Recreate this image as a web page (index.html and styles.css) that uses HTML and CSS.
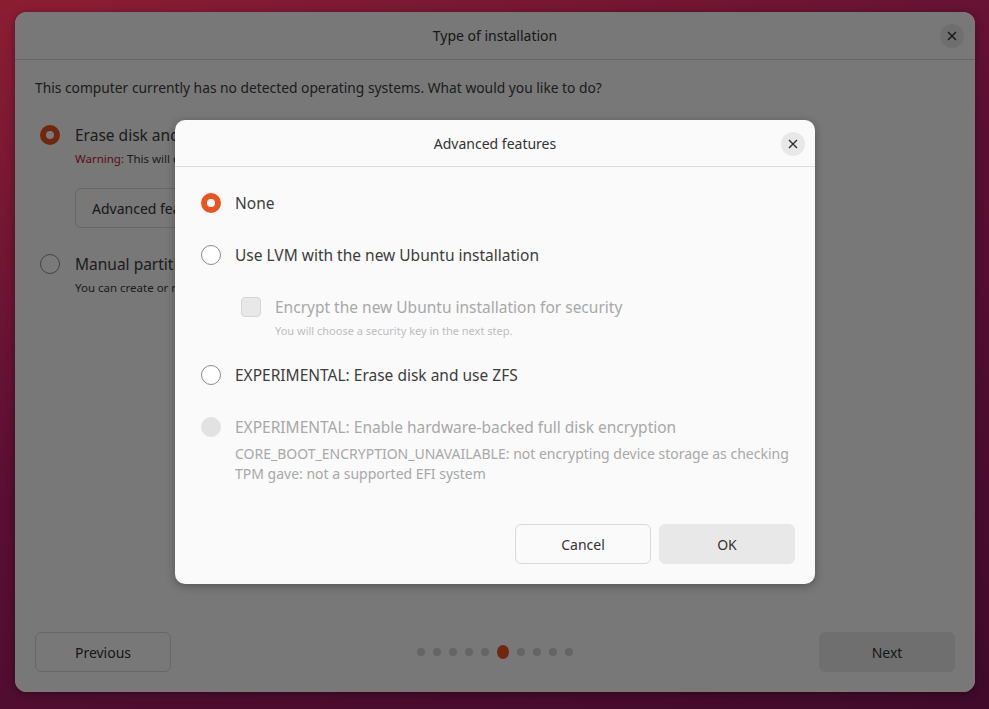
FILE: index.html
```html
<!DOCTYPE html>
<html lang="en">
<head>
    <meta charset="UTF-8">
    <title>Type of installation</title>
    <link rel="stylesheet" href="styles.css">
</head>
<body>
    <div class="window">
        <header class="win-header">
            <h1>Type of installation</h1>
            <span class="close-btn win-close">
                <svg width="10" height="10" viewBox="0 0 10 10"><path d="M1 1L9 9M9 1L1 9" stroke="#2e2e2e" stroke-width="1.4" fill="none"/></svg>
            </span>
        </header>
        <main class="win-body">
            <p class="intro">This computer currently has no detected operating systems. What would you like to do?</p>
            <div class="choice">
                <div class="opt big">
                    <span class="radio checked"></span>
                    <span>Erase disk and install Ubuntu</span>
                </div>
                <p class="hint"><span class="warn">Warning:</span> This will delete all your programs, documents, photos, music, and any other files.</p>
                <button class="btn adv-btn">Advanced features...</button>
            </div>
            <div class="choice">
                <div class="opt big">
                    <span class="radio"></span>
                    <span>Manual partitioning</span>
                </div>
                <p class="hint">You can create or resize partitions yourself, or choose multiple partitions for Ubuntu.</p>
            </div>
        </main>
        <footer class="win-footer">
            <button class="btn nav-btn">Previous</button>
            <div class="dots">
                <span class="dot"></span>
                <span class="dot"></span>
                <span class="dot"></span>
                <span class="dot"></span>
                <span class="dot"></span>
                <span class="dot active"></span>
                <span class="dot"></span>
                <span class="dot"></span>
                <span class="dot"></span>
                <span class="dot"></span>
            </div>
            <button class="btn nav-btn filled">Next</button>
        </footer>

        <div class="backdrop">
            <section class="dialog">
                <header class="dlg-header">
                    <h2>Advanced features</h2>
                    <span class="close-btn dlg-close">
                        <svg width="10" height="10" viewBox="0 0 10 10"><path d="M1 1L9 9M9 1L1 9" stroke="#2e2e2e" stroke-width="1.4" fill="none"/></svg>
                    </span>
                </header>
                <div class="dlg-body">
                    <div class="opt">
                        <span class="radio checked"></span>
                        <span>None</span>
                    </div>
                    <div class="opt gap-top">
                        <span class="radio"></span>
                        <span>Use LVM with the new Ubuntu installation</span>
                    </div>
                    <div class="opt sub-opt disabled">
                        <span class="checkbox"></span>
                        <span>Encrypt the new Ubuntu installation for security</span>
                    </div>
                    <p class="sub-hint">You will choose a security key in the next step.</p>
                    <div class="opt zfs">
                        <span class="radio"></span>
                        <span>EXPERIMENTAL: Erase disk and use ZFS</span>
                    </div>
                    <div class="opt gap-top disabled">
                        <span class="radio off"></span>
                        <span>EXPERIMENTAL: Enable hardware-backed full disk encryption</span>
                    </div>
                    <p class="desc">CORE_BOOT_ENCRYPTION_UNAVAILABLE: not encrypting device storage as checking<br>TPM gave: not a supported EFI system</p>
                    <div class="dlg-actions">
                        <button class="btn">Cancel</button>
                        <button class="btn filled">OK</button>
                    </div>
                </div>
            </section>
        </div>
    </div>
</body>
</html>
```

FILE: styles.css
```css
*{
    box-sizing: border-box;
    font-family: "Noto Sans", "Open Sans", sans-serif;
}
body{
    margin: 0;
    height: 709px;
    overflow: hidden;
    background: linear-gradient(160deg, #8c1d33 0%, #5a0f33 45%, #400a2b 100%);
}
p, h1, h2{
    margin: 0;
}
.window{
    position: relative;
    margin: 12px 14px 0 15px;
    height: 680px;
    background-color: #fafafa;
    border-radius: 12px;
    display: flex;
    flex-direction: column;
    color: #3d3d3d;
    overflow: hidden;
    box-shadow: 0 2px 8px rgba(0, 0, 0, 0.35);
}
.win-header{
    height: 48px;
    border-bottom: 1px solid #d6d6d6;
    display: flex;
    align-items: center;
    justify-content: center;
    position: relative;
}
h1, h2{
    font-size: 14px;
    font-weight: normal;
    color: #333;
}
.close-btn{
    width: 24px;
    height: 24px;
    border-radius: 50%;
    background-color: #e8e8e8;
    display: flex;
    align-items: center;
    justify-content: center;
    position: absolute;
}
.win-close{
    right: 11px;
    top: 12px;
}
.win-body{
    flex: 1;
    padding: 18px 20px 0 20px;
}
.intro{
    font-size: 13.8px;
    line-height: 20px;
}
.choice{
    padding-left: 5px;
    margin-top: 25px;
}
.choice + .choice{
    margin-top: 24px;
}
.opt{
    display: flex;
    align-items: center;
    gap: 14px;
    height: 24px;
    font-size: 15.5px;
}
.opt.big{
    gap: 15px;
}
.hint{
    font-size: 11.5px;
    line-height: 16px;
    margin-left: 35px;
    margin-top: 4px;
}
.warn{
    color: #b3263e;
}
.btn{
    height: 40px;
    border: 1px solid #d8d8d8;
    border-radius: 6px;
    background-color: #fafafa;
    color: #333;
    font-size: 14px;
    padding: 0 16px;
}
.btn.filled{
    background-color: #e8e8e8;
    border-color: #e8e8e8;
}
.adv-btn{
    margin: 21px 0 0 35px;
}
.radio{
    width: 20px;
    height: 20px;
    border-radius: 50%;
    border: 1px solid #8c8c8c;
    background-color: #fff;
    flex-shrink: 0;
}
.radio.checked{
    border: 6.5px solid #e95420;
    background-color: #fff;
}
.radio.off{
    border-color: #e2e2e2;
    background-color: #e2e2e2;
}
.checkbox{
    width: 20px;
    height: 20px;
    border-radius: 4px;
    border: 1px solid #d6d6d6;
    background-color: #e8e8e8;
    flex-shrink: 0;
}
.win-footer{
    height: 80px;
    padding: 20px 20px;
    display: flex;
    align-items: center;
    justify-content: space-between;
}
.nav-btn{
    width: 136px;
}
.dots{
    display: flex;
    align-items: center;
    gap: 8px;
}
.dot{
    width: 8px;
    height: 8px;
    border-radius: 50%;
    background-color: #d2d2d2;
}
.dot.active{
    width: 12px;
    height: 14px;
    background-color: #e95420;
}
.backdrop{
    position: absolute;
    inset: 0;
    background-color: rgba(0, 0, 0, 0.52);
    display: flex;
    align-items: center;
    justify-content: center;
}
.dialog{
    width: 640px;
    height: 464px;
    background-color: #fafafa;
    border-radius: 10px;
    position: relative;
    box-shadow: 0 2px 10px rgba(0, 0, 0, 0.3);
}
.dlg-header{
    height: 47px;
    border-bottom: 1px solid #dcdcdc;
    display: flex;
    align-items: center;
    justify-content: center;
}
.dlg-close{
    right: 10px;
    top: 12px;
}
.dlg-body{
    padding: 24px 20px 20px 26px;
    display: flex;
    flex-direction: column;
}
.gap-top{
    margin-top: 28px;
}
.sub-opt{
    margin-top: 28px;
    margin-left: 40px;
}
.disabled{
    color: #a8a8a8;
}
.sub-hint{
    font-size: 11px;
    line-height: 16px;
    color: #bdbdbd;
    margin: 4px 0 0 74px;
}
.zfs{
    margin-top: 24px;
}
.desc{
    font-size: 14px;
    line-height: 20px;
    color: #a8a8a8;
    margin: 5px 0 0 34px;
}
.dlg-actions{
    display: flex;
    justify-content: flex-end;
    gap: 8px;
    margin-top: 40px;
}
.dlg-actions .btn{
    width: 136px;
}
```
